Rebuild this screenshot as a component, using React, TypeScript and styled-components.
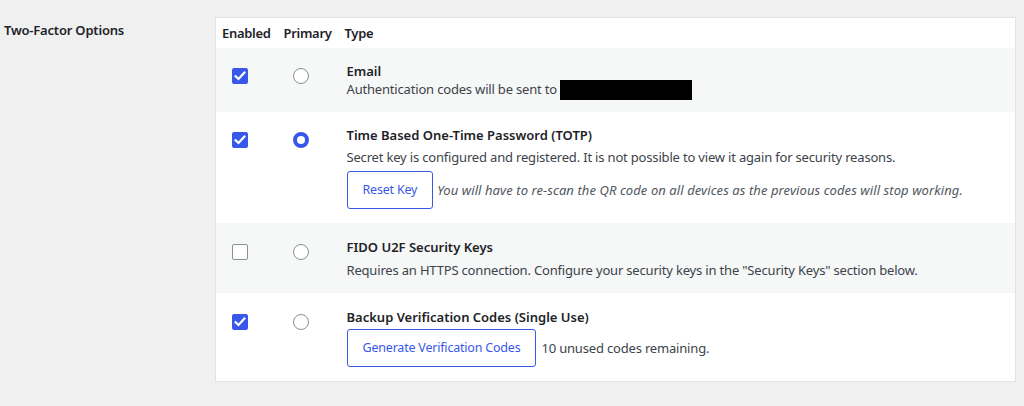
import React from "react";
import styled, { createGlobalStyle } from "styled-components";

const GlobalStyle = createGlobalStyle`
  html, body { margin: 0; padding: 0; background: #f0f0f1; }
  body {
    font-family: "Noto Sans", "Open Sans", Arial, sans-serif;
    font-size: 13px;
    color: #3c434a;
    -webkit-font-smoothing: antialiased;
  }
`;

const Page = styled.div`
  display: flex;
  align-items: flex-start;
  padding: 17px 8px 24px 0;
  width: 1024px;
  height: 406px;
  box-sizing: border-box;
`;

const SectionLabel = styled.div`
  width: 215px;
  flex: none;
  padding: 4px 0 0 4px;
  box-sizing: border-box;
  font-size: 13px;
  line-height: 18px;
  font-weight: 600;
  letter-spacing: -0.2px;
  color: #1d2327;
`;

const Table = styled.table`
  flex: 1;
  border-collapse: collapse;
  background: #fff;
  border: 1px solid #e2e3e5;
  table-layout: fixed;
`;

const HeadCell = styled.th<{ $w?: number; $pl: number }>`
  box-sizing: border-box;
  ${(p) => (p.$w ? `width: ${p.$w}px;` : "")}
  padding: 6px 0 6px ${(p) => p.$pl}px;
  text-align: left;
  font-weight: 600;
  font-size: 13px;
  line-height: 18px;
  letter-spacing: -0.3px;
  color: #1d2327;
  white-space: nowrap;
`;

const Row = styled.tr<{ $striped?: boolean }>`
  background: ${(p) => (p.$striped ? "#f6f7f7" : "#ffffff")};
`;

const ControlCell = styled.td<{ $pl: number; $pt: number }>`
  vertical-align: top;
  padding: ${(p) => p.$pt}px 0 0 ${(p) => p.$pl}px;
`;

const TypeCell = styled.td<{ $pt: number; $pb: number }>`
  vertical-align: top;
  padding: ${(p) => p.$pt}px 10px ${(p) => p.$pb}px 9px;
`;

const Title = styled.div`
  font-weight: 600;
  font-size: 13px;
  line-height: 18px;
  color: #1d2327;
`;

const Description = styled.div<{ $mt: number }>`
  margin-top: ${(p) => p.$mt}px;
  font-size: 13px;
  line-height: 18px;
  letter-spacing: -0.18px;
  color: #3c434a;
`;

const Redacted = styled.span`
  display: inline-block;
  width: 132px;
  height: 20px;
  margin: 0 0 -2px 3px;
  background: #000;
  vertical-align: top;
`;

const Actions = styled.div<{ $mt: number }>`
  display: flex;
  align-items: center;
  gap: 4px;
  margin-top: ${(p) => p.$mt}px;
  white-space: nowrap;
`;

const Button = styled.button`
  flex: none;
  height: 38px;
  padding: 0 15px;
  box-sizing: border-box;
  background: #fff;
  border: 1px solid #3858e9;
  border-radius: 3px;
  color: #3858e9;
  font-family: inherit;
  font-size: 12.5px;
  letter-spacing: -0.2px;
  line-height: 36px;
  white-space: nowrap;
  cursor: pointer;
`;

const Note = styled.span<{ $italic?: boolean }>`
  font-size: 13px;
  line-height: 18px;
  letter-spacing: ${(p) => (p.$italic ? "0.08px" : "-0.18px")};
  color: ${(p) => (p.$italic ? "#50575e" : "#3c434a")};
  font-style: ${(p) => (p.$italic ? "italic" : "normal")};
  margin-left: ${(p) => (p.$italic ? 0 : 1)}px;
`;

const Checkbox = styled.span<{ $checked?: boolean }>`
  display: flex;
  align-items: center;
  justify-content: center;
  width: 16px;
  height: 16px;
  box-sizing: border-box;
  border-radius: 2px;
  border: 1px solid ${(p) => (p.$checked ? "#3858e9" : "#8c8f94")};
  background: ${(p) => (p.$checked ? "#3858e9" : "#fff")};
`;

const Radio = styled.span<{ $checked?: boolean }>`
  display: block;
  width: 16px;
  height: 16px;
  box-sizing: border-box;
  border-radius: 50%;
  background: #fff;
  border: ${(p) => (p.$checked ? "4px solid #3858e9" : "1px solid #8c8f94")};
`;

const Check = () => (
  <svg width="14" height="14" viewBox="0 0 14 14" aria-hidden="true">
    <path
      d="M2.6 7.2l2.9 2.8 5.9-6.4"
      fill="none"
      stroke="#fff"
      strokeWidth="2.2"
      strokeLinecap="square"
      strokeLinejoin="miter"
    />
  </svg>
);

type Method = {
  enabled: boolean;
  primary: boolean;
  striped: boolean;
  pt: number;
  pb: number;
  title: string;
  body: React.ReactNode;
};

const methods: Method[] = [
  {
    enabled: true,
    primary: false,
    striped: true,
    pt: 14,
    pb: 14,
    title: "Email",
    body: (
      <Description $mt={0}>
        Authentication codes will be sent to
        <Redacted />
      </Description>
    ),
  },
  {
    enabled: true,
    primary: true,
    striped: false,
    pt: 14,
    pb: 14,
    title: "Time Based One-Time Password (TOTP)",
    body: (
      <>
        <Description $mt={4}>
          Secret key is configured and registered. It is not possible to view it again for security reasons.
        </Description>
        <Actions $mt={5}>
          <Button type="button">Reset Key</Button>
          <Note $italic>
            You will have to re-scan the QR code on all devices as the previous codes will stop working.
          </Note>
        </Actions>
      </>
    ),
  },
  {
    enabled: false,
    primary: false,
    striped: true,
    pt: 15,
    pb: 14,
    title: "FIDO U2F Security Keys",
    body: (
      <Description $mt={5}>
        Requires an HTTPS connection. Configure your security keys in the "Security Keys" section below.
      </Description>
    ),
  },
  {
    enabled: true,
    primary: false,
    striped: false,
    pt: 15,
    pb: 14,
    title: "Backup Verification Codes (Single Use)",
    body: (
      <Actions $mt={3}>
        <Button type="button">Generate Verification Codes</Button>
        <Note>10 unused codes remaining.</Note>
      </Actions>
    ),
  },
];

export default function App() {
  return (
    <>
      <GlobalStyle />
      <Page>
        <SectionLabel>Two-Factor Options</SectionLabel>
        <Table>
          <thead>
            <tr>
              <HeadCell $w={62} $pl={6}>Enabled</HeadCell>
              <HeadCell $w={60} $pl={6}>Primary</HeadCell>
              <HeadCell $pl={7}>Type</HeadCell>
            </tr>
          </thead>
          <tbody>
            {methods.map((m) => (
              <Row key={m.title} $striped={m.striped}>
                <ControlCell $pl={16} $pt={m.pt + 6}>
                  <Checkbox $checked={m.enabled}>{m.enabled && <Check />}</Checkbox>
                </ControlCell>
                <ControlCell $pl={15} $pt={m.pt + 6}>
                  <Radio $checked={m.primary} />
                </ControlCell>
                <TypeCell $pt={m.pt} $pb={m.pb}>
                  <Title>{m.title}</Title>
                  {m.body}
                </TypeCell>
              </Row>
            ))}
          </tbody>
        </Table>
      </Page>
    </>
  );
}
